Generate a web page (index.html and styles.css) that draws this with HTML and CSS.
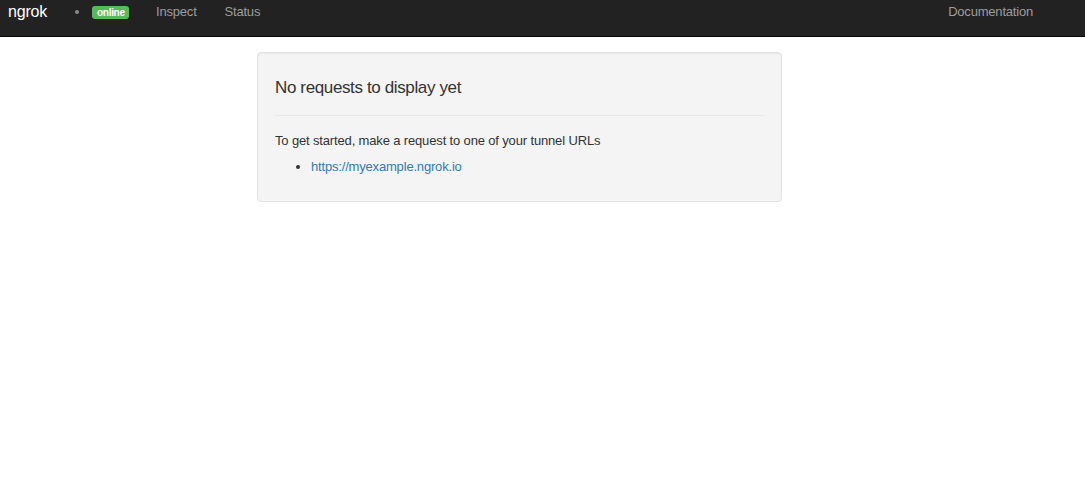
FILE: index.html
```html
<!DOCTYPE html>
<html>
<head>
<meta charset="utf-8">
<link rel="stylesheet" href="styles.css">
</head>
<body>
<nav class="navbar">
  <div class="nav-left">
    <span class="brand">ngrok</span>
    <span class="dot"></span>
    <span class="badge">online</span>
    <a class="nav-link inspect">Inspect</a>
    <a class="nav-link status">Status</a>
  </div>
  <a class="nav-link docs">Documentation</a>
</nav>
<main class="main">
  <div class="well">
    <h4 class="title">No requests to display yet</h4>
    <hr class="rule">
    <p class="intro">To get started, make a request to one of your tunnel URLs</p>
    <ul class="urls">
      <li><a class="url">https://myexample.ngrok.io</a></li>
    </ul>
  </div>
</main>
</body>
</html>
```
FILE: styles.css
```css
html, body {
  margin: 0;
  padding: 0;
  background: #fff;
  font-family: "Liberation Sans", Arial, sans-serif;
  color: #333;
}
.navbar {
  height: 36px;
  background: #222;
  border-bottom: 1px solid #080808;
  display: flex;
  justify-content: space-between;
  align-items: flex-start;
  padding: 0 52px 0 8px;
}
.nav-left {
  display: flex;
  align-items: center;
  height: 24px;
}
.brand {
  color: #fff;
  font-size: 16px;
  line-height: 24px;
  letter-spacing: -0.2px;
}
.dot {
  width: 4px;
  height: 4px;
  border-radius: 50%;
  background: #8a8a8a;
  margin-left: 28px;
}
.badge {
  margin-left: 13px;
  background: #5cb85c;
  color: #fff;
  font-size: 10px;
  font-weight: bold;
  line-height: 13px;
  padding: 0 5px;
  border-radius: 3px;
  width: 27px;
  text-align: center;
  letter-spacing: -0.3px;
}
.nav-link {
  color: #9d9d9d;
  font-size: 13px;
  line-height: 24px;
  text-decoration: none;
  letter-spacing: -0.2px;
}
.inspect { margin-left: 27px; }
.status { margin-left: 28px; }
.docs { display: block; }
.main {
  padding: 15px 0 0 257px;
}
.well {
  width: 489px;
  background: #f4f4f4;
  border: 1px solid #e3e3e3;
  border-radius: 4px;
  box-shadow: inset 0 1px 1px rgba(0,0,0,0.05);
  padding: 25px 17px 25px;
}
.title {
  margin: 0;
  font-size: 17px;
  font-weight: normal;
  line-height: 20px;
  letter-spacing: -0.37px;
}
.rule {
  margin: 17px 0 16px;
  border: 0;
  border-top: 1px solid #e8e8e8;
}
.intro {
  margin: 0;
  font-size: 13px;
  line-height: 18px;
  letter-spacing: -0.15px;
}
.urls {
  margin: 8px 0 0;
  padding-left: 36px;
  font-size: 13px;
  line-height: 18px;
  letter-spacing: -0.18px;
}
.url {
  color: #337ab7;
  text-decoration: none;
}
```
